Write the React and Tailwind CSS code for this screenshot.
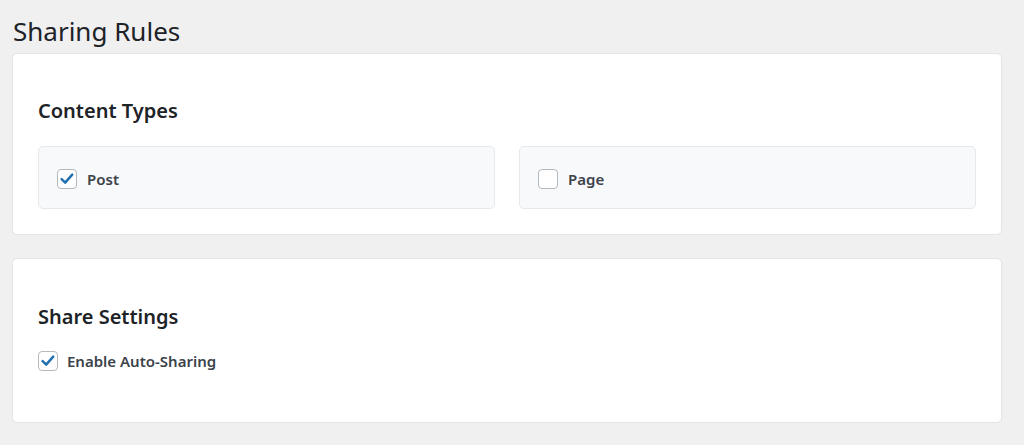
import React from 'react';

function Box({ checked }) {
  return (
    <span className="w-5 h-5 shrink-0 rounded-[4px] border border-[#b4b9be] bg-white flex items-center justify-center">
      {checked && (
        <svg viewBox="0 0 20 20" className="w-[18px] h-[18px]">
          <path d="M4 10.2 L8 14 L15.8 5.2" fill="none" stroke="#2271b1" strokeWidth="2.8" strokeLinecap="round" strokeLinejoin="round" />
        </svg>
      )}
    </span>
  );
}

function TypeItem({ label, checked }) {
  return (
    <div className="h-[63px] bg-[#f8f9fa] border border-[#e6e8eb] rounded-[5px] flex items-center gap-[10px] px-[18px] pt-[3px]">
      <Box checked={checked} />
      <span className="text-[15px] font-semibold text-[#3c434a]">{label}</span>
    </div>
  );
}

export default function App() {
  return (
    <div
      className="min-h-[445px] bg-[#f0f0f1] pl-3 pr-[22px] pt-[14px] pb-6 text-[#1d2327]"
      style={{ fontFamily: '"Noto Sans", "Open Sans", Arial, sans-serif' }}
    >
      <h1 className="text-[26px] leading-[34px] font-normal text-[#1d2327] pl-[1px] mb-[5px]">Sharing Rules</h1>

      <div className="bg-white border border-[#e2e4e7] rounded-[5px] px-[25px] pt-[43px] pb-[25px]">
        <h2 className="text-[20px] leading-[28px] font-semibold mb-[21px]">Content Types</h2>
        <div className="grid grid-cols-2 gap-6">
          <TypeItem label="Post" checked />
          <TypeItem label="Page" />
        </div>
      </div>

      <div className="mt-[23px] bg-white border border-[#e2e4e7] rounded-[5px] px-[25px] pt-[44px] pb-[49px]">
        <h2 className="text-[20px] leading-[28px] font-semibold mb-[19px]">Share Settings</h2>
        <label className="flex items-center gap-[9px]">
          <Box checked />
          <span className="text-[15px] font-semibold text-[#3c434a]">Enable Auto-Sharing</span>
        </label>
      </div>
    </div>
  );
}
